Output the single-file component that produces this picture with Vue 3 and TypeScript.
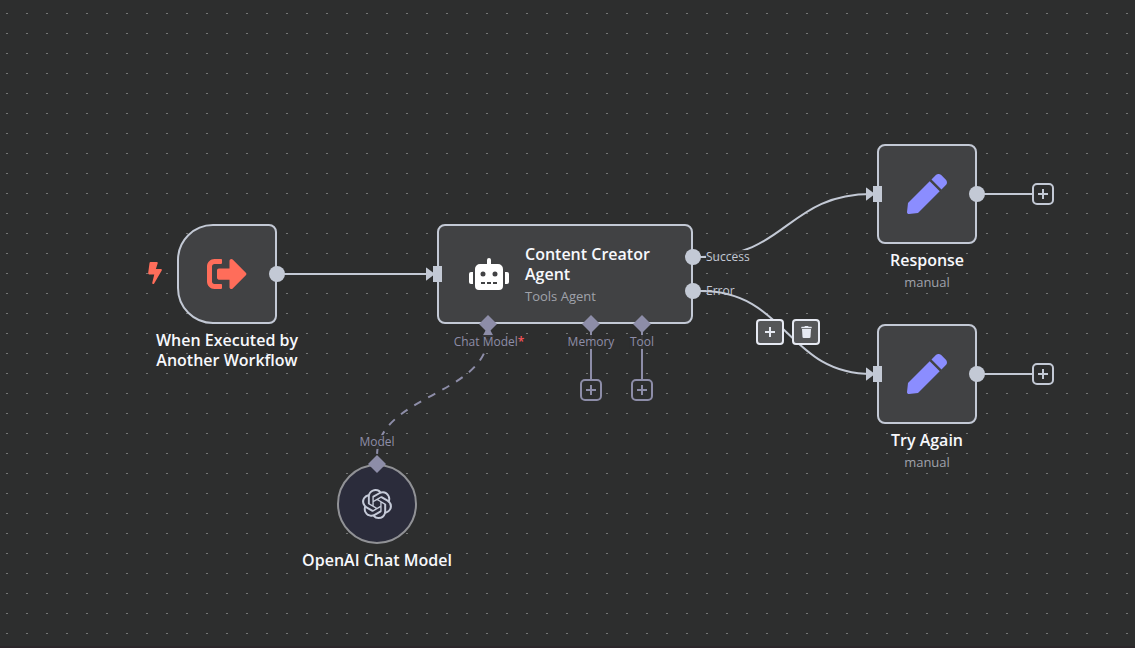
<script setup lang="ts">
interface Point {
  id: string
  x: number
  y: number
}
interface SetNode extends Point {
  title: string
}
interface PortLabel extends Point {
  text: string
  required?: boolean
}

const setNodes: SetNode[] = [
  { id: 'response', title: 'Response', x: 877, y: 144 },
  { id: 'try-again', title: 'Try Again', x: 877, y: 324 },
]

const outputs: Point[] = [
  { id: 'trigger-out', x: 277, y: 274 },
  { id: 'agent-success', x: 693, y: 257 },
  { id: 'agent-error', x: 693, y: 291 },
  { id: 'response-out', x: 977, y: 194 },
  { id: 'retry-out', x: 977, y: 374 },
]

const inputs: Point[] = [
  { id: 'agent-in', x: 437, y: 274 },
  { id: 'response-in', x: 877, y: 194 },
  { id: 'retry-in', x: 877, y: 374 },
]

const diamonds: Point[] = [
  { id: 'chat-model', x: 488, y: 324 },
  { id: 'memory', x: 591, y: 324 },
  { id: 'tool', x: 642, y: 324 },
  { id: 'model', x: 377, y: 464 },
]

const aiLabels: PortLabel[] = [
  { id: 'chat-model', text: 'Chat Model', required: true, x: 489, y: 342 },
  { id: 'memory', text: 'Memory', x: 591, y: 342 },
  { id: 'tool', text: 'Tool', x: 642, y: 342 },
  { id: 'model', text: 'Model', x: 377, y: 442 },
]

const addButtons: (Point & { ai: boolean; label: string })[] = [
  { id: 'memory', x: 591, y: 390, ai: true, label: 'Add memory' },
  { id: 'tool', x: 642, y: 390, ai: true, label: 'Add tool' },
  { id: 'response', x: 1043, y: 194, ai: false, label: 'Add node after Response' },
  { id: 'retry', x: 1043, y: 374, ai: false, label: 'Add node after Try Again' },
]

const at = (p: Point) => ({ left: `${p.x}px`, top: `${p.y}px` })
</script>

<template>
  <main class="canvas">
    <svg class="layer" aria-hidden="true">
      <defs>
        <pattern id="grid" width="20" height="20" patternUnits="userSpaceOnUse">
          <rect x="6" y="13" width="2" height="1" fill="#747675" />
        </pattern>
      </defs>
      <rect width="100%" height="100%" fill="url(#grid)" />
      <g class="edge">
        <path d="M277 274H430" />
        <path d="M701 257C787 257 787 194 872 194" />
        <path d="M701 291C787 291 787 374 872 374" />
        <path d="M977 194H1032" />
        <path d="M977 374H1032" />
      </g>
      <g class="edge edge-ai">
        <path d="M591 324V379" />
        <path d="M642 324V379" />
        <path class="dashed" d="M377 456C377 395 488 395 488 335" />
      </g>
      <path class="tip-ai" d="M488 326L494 337H482Z" />
      <path v-for="p in inputs" :key="p.id" class="tip" :d="`M${p.x - 11} ${p.y - 6}v12q0 1 1 0l8-6l-8-6q-1-1-1 0Z`" />
    </svg>

    <svg class="bolt" viewBox="0 0 320 512" aria-hidden="true">
      <path d="M296 160H180.6l42.6-129.8C227.2 15 215.7 0 200 0H56C44 0 33.8 8.9 32.2 20.8l-32 240C-1.7 275.2 9.5 288 24 288h118.7L96.6 482.5c-3.6 15.2 8 29.5 23.3 29.5 8.4 0 16.4-4.4 20.8-12l176-304c9.3-15.9-2.2-36-20.7-36z" />
    </svg>

    <article class="node trigger">
      <div class="box">
        <svg class="icon" viewBox="0 0 512 512" fill="#ff6d5a" aria-hidden="true">
          <path d="M497 273L329 441c-15 15-41 4.5-41-17v-96H152c-13.3 0-24-10.7-24-24v-96c0-13.3 10.7-24 24-24h136V88c0-21.4 25.9-32 41-17l168 168c9.3 9.4 9.3 24.6 0 34zM192 436v-40c0-6.6-5.4-12-12-12H96c-17.7 0-32-14.3-32-32V160c0-17.7 14.3-32 32-32h84c6.6 0 12-5.4 12-12V76c0-6.6-5.4-12-12-12H96c-53 0-96 43-96 96v192c0 53 43 96 96 96h84c6.6 0 12-5.4 12-12z" />
        </svg>
      </div>
      <h2 class="title">When Executed by<br />Another Workflow</h2>
    </article>

    <article class="node agent">
      <div class="box">
        <svg class="robot" viewBox="0 0 640 512" fill="#fff" aria-hidden="true">
          <path d="M32,224H64V416H32A32,32,0,0,1,0,384V256A32,32,0,0,1,32,224Zm512-48V448a64,64,0,0,1-64,64H160a64,64,0,0,1-64-64V176a80,80,0,0,1,80-80H288V32a32,32,0,0,1,64,0V96H464A80,80,0,0,1,544,176ZM264,256a40,40,0,1,0-40,40A40,40,0,0,0,264,256Zm-8,128H192v32h64Zm96,0H288v32h64ZM456,256a40,40,0,1,0-40,40A40,40,0,0,0,456,256Zm-8,128H384v32h64ZM640,256V384a32,32,0,0,1-32,32H576V224h32A32,32,0,0,1,640,256Z" />
        </svg>
        <div class="agent-text">
          <h2 class="title">Content Creator Agent</h2>
          <p class="subtitle">Tools Agent</p>
        </div>
      </div>
    </article>

    <article v-for="n in setNodes" :key="n.id" class="node" :style="at(n)">
      <div class="box">
        <svg class="icon" viewBox="0 0 512 512" fill="#8b8dff" aria-hidden="true">
          <path d="M290.74 93.24l128.02 128.02-277.99 277.99-114.14 12.6C11.35 513.54-1.56 500.62.14 485.34l12.7-114.22 277.9-277.88zm207.2-19.06l-60.11-60.11c-18.75-18.75-49.16-18.75-67.91 0l-56.55 56.55 128.02 128.02 56.55-56.55c18.75-18.76 18.75-49.16 0-67.91z" />
        </svg>
      </div>
      <h2 class="title">{{ n.title }}</h2>
      <p class="subtitle">manual</p>
    </article>

    <article class="node model">
      <div class="box">
        <svg class="openai" viewBox="0 0 24 24" fill="#c5cad8" aria-hidden="true">
          <path d="M22.2819 9.8211a5.9847 5.9847 0 0 0-.5157-4.9108 6.0462 6.0462 0 0 0-6.5098-2.9A6.0651 6.0651 0 0 0 4.9807 4.1818a5.9847 5.9847 0 0 0-3.9977 2.9 6.0462 6.0462 0 0 0 .7427 7.0966 5.98 5.98 0 0 0 .511 4.9107 6.051 6.051 0 0 0 6.5146 2.9001A5.9847 5.9847 0 0 0 13.2599 24a6.0557 6.0557 0 0 0 5.7718-4.2058 5.9894 5.9894 0 0 0 3.9977-2.9001 6.0557 6.0557 0 0 0-.7475-7.0729zm-9.022 12.6081a4.4755 4.4755 0 0 1-2.8764-1.0408l.1419-.0804 4.7783-2.7582a.7948.7948 0 0 0 .3927-.6813v-6.7369l2.02 1.1686a.071.071 0 0 1 .038.052v5.5826a4.504 4.504 0 0 1-4.4945 4.4944zm-9.6607-4.1254a4.4708 4.4708 0 0 1-.5346-3.0137l.142.0852 4.783 2.7582a.7712.7712 0 0 0 .7806 0l5.8428-3.3685v2.3324a.0804.0804 0 0 1-.0332.0615L9.74 19.9502a4.4992 4.4992 0 0 1-6.1408-1.6464zM2.3408 7.8956a4.485 4.485 0 0 1 2.3655-1.9728V11.6a.7664.7664 0 0 0 .3879.6765l5.8144 3.3543-2.0201 1.1685a.0757.0757 0 0 1-.071 0l-4.8303-2.7865A4.504 4.504 0 0 1 2.3408 7.872zm16.5963 3.8558L13.1038 8.364 15.1192 7.2a.0757.0757 0 0 1 .071 0l4.8303 2.7913a4.4944 4.4944 0 0 1-.6765 8.1042v-5.6772a.79.79 0 0 0-.407-.667zm2.0107-3.0231l-.142-.0852-4.7735-2.7818a.7759.7759 0 0 0-.7854 0L9.409 9.2297V6.8974a.0662.0662 0 0 1 .0284-.0615l4.8303-2.7866a4.4992 4.4992 0 0 1 6.6802 4.66zM8.3065 12.863l-2.02-1.1638a.0804.0804 0 0 1-.038-.0567V6.0742a4.4992 4.4992 0 0 1 7.3757-3.4537l-.142.0805L8.704 5.459a.7948.7948 0 0 0-.3927.6813zm1.0976-2.3654l2.602-1.4998 2.6069 1.4998v2.9994l-2.5974 1.4997-2.6067-1.4997Z" />
        </svg>
      </div>
      <h2 class="title">OpenAI Chat Model</h2>
    </article>

    <svg class="layer" aria-hidden="true">
      <g fill="#c3c9d5">
        <circle v-for="p in outputs" :key="p.id" :cx="p.x" :cy="p.y" r="8" />
        <rect v-for="p in inputs" :key="p.id" :x="p.x - 4" :y="p.y - 8" width="9" height="16" />
      </g>
      <path v-for="p in diamonds" :key="p.id" class="tip-ai" :d="`M${p.x} ${p.y - 9}l9 9l-9 9l-9-9Z`" />
      <path class="edge" d="M700 257H706M700 291H706" />
    </svg>

    <span class="port success">Success</span>
    <span class="port error">Error</span>
    <span v-for="l in aiLabels" :key="l.id" class="port ai" :style="at(l)">{{ l.text }}<b v-if="l.required">*</b></span>

    <button
      v-for="b in addButtons"
      :key="b.id"
      type="button"
      class="add"
      :class="{ 'add-ai': b.ai }"
      :style="at(b)"
      :aria-label="b.label"
    >
      <svg viewBox="0 0 12 12" aria-hidden="true"><path d="M6 1V11M1 6H11" /></svg>
    </button>

    <div class="toolbar">
      <button type="button" aria-label="Insert node">
        <svg class="plus" viewBox="0 0 12 12" aria-hidden="true"><path d="M6 1V11M1 6H11" /></svg>
      </button>
      <button type="button" aria-label="Delete connection">
        <svg class="trash" viewBox="0 0 448 512" aria-hidden="true">
          <path d="M432 32H312l-9.4-18.7A24 24 0 0 0 281.1 0H166.8a23.72 23.72 0 0 0-21.4 13.3L136 32H16A16 16 0 0 0 0 48v32a16 16 0 0 0 16 16h416a16 16 0 0 0 16-16V48a16 16 0 0 0-16-16zM53.2 467a48 48 0 0 0 47.9 45h245.8a48 48 0 0 0 47.9-45L416 128H32z" />
        </svg>
      </button>
    </div>
  </main>
</template>

<style>
body {
  background: #2d2e2e;
}
</style>

<style scoped>
.canvas {
  position: relative;
  box-sizing: border-box;
  height: 100vh;
  overflow: hidden;
  background: #2d2e2e;
  border-bottom: 2px solid #2c272b;
  font-family: "Open Sans", "Noto Sans", sans-serif;
}
.layer {
  position: absolute;
  inset: 0;
  width: 100%;
  height: 100%;
  pointer-events: none;
}
.edge {
  fill: none;
  stroke: #c3c9d5;
  stroke-width: 2;
}
.edge-ai {
  stroke: #8d8da8;
}
.dashed {
  stroke-dasharray: 8 8;
  stroke-dashoffset: -2;
}
.tip {
  fill: #c3c9d5;
}
.tip-ai {
  fill: #8d8da8;
}
.bolt {
  position: absolute;
  left: 148px;
  top: 262px;
  width: 14px;
  height: 22px;
  fill: #ff6d5a;
}
.node {
  position: absolute;
  display: flex;
  flex-direction: column;
  align-items: center;
  width: 100px;
}
.box {
  box-sizing: border-box;
  display: flex;
  align-items: center;
  justify-content: center;
  width: 100%;
  height: 100px;
  margin-bottom: 6px;
  border: 2px solid #c3c9d5;
  border-radius: 8px;
  background: #414244;
}
.icon {
  width: 40px;
  height: 40px;
}
.title {
  margin: 0;
  font-size: 16px;
  line-height: 20px;
  font-weight: 600;
  color: #f7f8fc;
  text-align: center;
  white-space: nowrap;
}
.subtitle {
  margin: 2px 0 0;
  font-size: 13px;
  line-height: 20px;
  color: #a0a2ab;
}
.trigger {
  left: 177px;
  top: 224px;
}
.trigger .box {
  border-radius: 36px 8px 8px 36px;
}
.agent {
  left: 437px;
  top: 224px;
  width: 256px;
}
.agent .box {
  justify-content: flex-start;
  gap: 16px;
  padding-left: 30px;
}
.robot {
  flex: none;
  width: 40px;
  height: 32px;
}
.agent-text {
  width: 136px;
  padding-top: 2px;
}
.agent .title {
  text-align: left;
  white-space: normal;
}
.model {
  left: 337px;
  top: 464px;
  width: 80px;
}
.model .box {
  height: 80px;
  border-color: #919296;
  border-radius: 50%;
  background: #2b2c3b;
}
.openai {
  width: 30px;
  height: 30px;
}
.port {
  position: absolute;
  font-size: 12px;
  line-height: 14px;
  color: #c3c9d5;
  white-space: nowrap;
}
.success {
  left: 706px;
  top: 250px;
  background: rgba(45, 46, 46, 0.9);
}
.error {
  left: 706px;
  top: 284px;
}
.ai {
  transform: translate(-50%, -50%);
  color: #8d8da8;
  background: rgba(45, 46, 46, 0.9);
}
.ai b {
  font-weight: 600;
  color: #f7555c;
}
button {
  box-sizing: border-box;
  display: flex;
  align-items: center;
  justify-content: center;
  padding: 0;
  cursor: pointer;
}
.add {
  position: absolute;
  width: 22px;
  height: 22px;
  transform: translate(-50%, -50%);
  border: 2px solid #c3c9d5;
  border-radius: 5px;
  background: #2d2e2e;
  color: #c3c9d5;
}
.add-ai {
  border-color: #8d8da8;
  color: #8d8da8;
}
.add svg,
.plus {
  width: 12px;
  height: 12px;
  fill: none;
  stroke: currentColor;
  stroke-width: 2;
}
.toolbar {
  position: absolute;
  left: 756px;
  top: 319px;
  display: flex;
  gap: 8px;
}
.toolbar button {
  width: 28px;
  height: 26px;
  border: 2px solid #e6e9f2;
  border-radius: 4px;
  background: #555658;
  color: #e6e9f2;
}
.trash {
  width: 11px;
  height: 12px;
  fill: currentColor;
}
</style>
